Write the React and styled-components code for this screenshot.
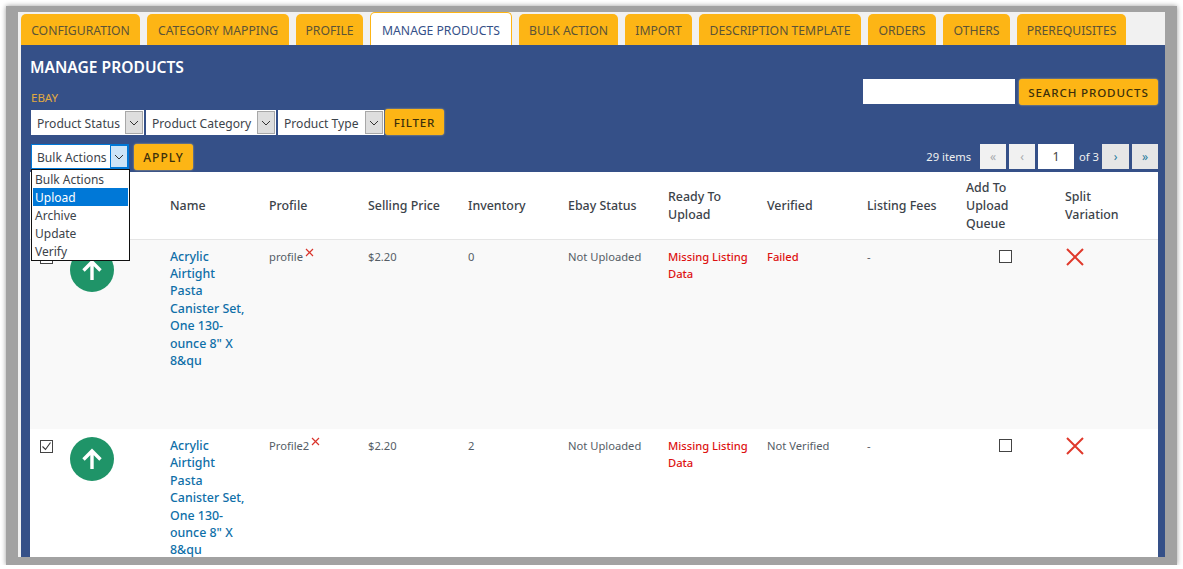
import React from "react";
import styled, { createGlobalStyle } from "styled-components";

const Global = createGlobalStyle`
  html, body { margin: 0; padding: 0; background: #fff; overflow: hidden; }
  body { font-family: "Noto Sans", "Open Sans", sans-serif; }
`;

const Frame = styled.div`
  box-sizing: border-box;
  width: 1171px;
  height: 559px;
  margin: 6px 0 0 6px;
  border-style: solid;
  border-color: #a2a2a2;
  border-width: 6px 12px 8px 12px;
  box-shadow: 0 0 5px rgba(0, 0, 0, 0.4);
  background: #f1f1f1;
  overflow: hidden;
  padding: 2px 0 0 3px;
  display: flex;
  flex-direction: column;
`;

const TabBar = styled.div`
  display: flex;
  gap: 7px;
  height: 31px;
  flex: none;
  align-items: flex-end;
`;

const Tab = styled.div`
  box-sizing: border-box;
  width: ${(p) => p.$w}px;
  height: ${(p) => (p.$active ? 33 : 31)}px;
  padding-top: 2px;
  display: flex;
  align-items: center;
  justify-content: center;
  border-radius: 5px 5px 0 0;
  background: ${(p) => (p.$active ? "#ffffff" : "#fdb515")};
  color: ${(p) => (p.$active ? "#355088" : "#5b5337")};
  border: ${(p) => (p.$active ? "1px solid #fdb515" : "none")};
  border-bottom: none;
  font-size: 12.2px;
  white-space: nowrap;
`;

const Panel = styled.div`
  flex: 1;
  min-height: 0;
  background: #355088;
  padding: 0 7px 0 9px;
  display: flex;
  flex-direction: column;
`;

const Top = styled.div`
  display: flex;
  justify-content: space-between;
  height: 99px;
  flex: none;
`;

const TopLeft = styled.div`
  display: flex;
  flex-direction: column;
  padding-left: 1px;
`;

const Title = styled.h2`
  margin: 12px 0 0 -1px;
  font-size: 15.6px;
  line-height: 20px;
  font-weight: 600;
  color: #fff;
`;

const Market = styled.div`
  margin-top: 13px;
  font-size: 11.5px;
  line-height: 16px;
  color: #e0a93f;
`;

const FilterRow = styled.div`
  display: flex;
  align-items: flex-end;
  gap: 2px;
  margin-top: 3px;
`;

const Select = styled.div`
  box-sizing: border-box;
  width: ${(p) => p.$w}px;
  height: 25px;
  background: #fff;
  display: flex;
  align-items: center;
  justify-content: space-between;
  padding: 0 1px 0 6px;
  font-size: 12.1px;
  color: #3c434a;
  white-space: nowrap;
  ${(p) => p.$focus && "outline: 1px solid #0078d7; outline-offset: -1px;"}
`;

const SelectText = styled.span`
  padding-top: 2px;
`;

const Arrow = styled.span`
  box-sizing: border-box;
  width: 18px;
  height: 23px;
  flex: none;
  display: flex;
  align-items: center;
  justify-content: center;
  background: ${(p) => (p.$focus ? "#cce4f7" : "#dedede")};
  border: 1px solid ${(p) => (p.$focus ? "#0078d7" : "#a8a8a8")};
  color: #333;
`;

const Button = styled.div`
  box-sizing: border-box;
  width: ${(p) => p.$w}px;
  height: 26px;
  flex: none;
  display: flex;
  align-items: center;
  justify-content: center;
  background: #fdb515;
  border-radius: 3px;
  box-shadow: 0 0 2px rgba(255, 215, 120, 0.8);
  color: #3b2f0b;
  font-size: ${(p) => p.$fs || 11.6}px;
  font-weight: 500;
  letter-spacing: ${(p) => p.$ls || 0.85}px;
  white-space: nowrap;
`;

const FilterButton = styled(Button)`
  margin-left: -1px;
`;

const SearchRow = styled.div`
  display: flex;
  gap: 4px;
  margin-top: 34px;
`;

const SearchInput = styled.div`
  width: 152px;
  height: 25px;
  background: #fff;
`;

const BulkRow = styled.div`
  position: relative;
  flex: none;
  height: 28px;
  display: flex;
  justify-content: space-between;
  align-items: flex-start;
  padding-left: 1px;
`;

const BulkLeft = styled.div`
  display: flex;
  gap: 5px;
`;

const Menu = styled.ul`
  position: absolute;
  left: 1px;
  top: 25px;
  z-index: 5;
  box-sizing: border-box;
  width: 99px;
  margin: 0;
  padding: 0 1px;
  list-style: none;
  background: #fff;
  border: 1px solid #111;
`;

const MenuItem = styled.li`
  height: 18px;
  line-height: 19px;
  padding-left: 2px;
  font-size: 12px;
  background: ${(p) => (p.$on ? "#0078d7" : "#fff")};
  color: ${(p) => (p.$on ? "#fff" : "#3c434a")};
`;

const Pager = styled.div`
  display: flex;
  align-items: center;
  height: 25px;
  font-size: 11.2px;
  color: #f0f0f0;
`;

const PageBtn = styled.div`
  box-sizing: border-box;
  width: ${(p) => p.$w || 26}px;
  height: 25px;
  margin-left: ${(p) => p.$ml}px;
  display: flex;
  align-items: center;
  justify-content: center;
  background: ${(p) => (p.$off ? "#f1f1f1" : "#e6e6e6")};
  color: ${(p) => (p.$off ? "#a7aaad" : "#1f7a9c")};
  font-size: 12px;
`;

const PageInput = styled.div`
  box-sizing: border-box;
  width: 36px;
  height: 25px;
  margin: 0 5px 0 3px;
  display: flex;
  align-items: center;
  justify-content: center;
  background: #fff;
  color: #444;
  font-size: 12.4px;
`;

const Table = styled.table`
  table-layout: fixed;
  border-collapse: collapse;
  width: 1128px;
  background: #fff;
  flex: none;
`;

const Th = styled.th`
  box-sizing: border-box;
  width: ${(p) => p.$w}px;
  height: 67px;
  padding: 2px 10px 0;
  text-align: left;
  font-size: 12.4px;
  line-height: 18px;
  font-weight: 500;
  color: #3c434a;
  border-bottom: 1px solid #e5e5e5;
`;

const Row = styled.tr`
  height: ${(p) => p.$h}px;
  background: ${(p) => (p.$alt ? "#f9f9f9" : "#fff")};
`;

const Td = styled.td`
  padding: 8px 10px;
  vertical-align: top;
  font-size: 11.2px;
  line-height: 17.4px;
  color: ${(p) => (p.$red ? "#dd1111" : "#555d66")};
  font-weight: ${(p) => (p.$red ? 500 : 400)};
  white-space: ${(p) => (p.$red ? "nowrap" : "normal")};
  text-align: ${(p) => (p.$center ? "center" : "left")};
`;

const CheckCell = styled.td`
  padding: 11px 0 0 10px;
  vertical-align: top;
`;

const Box = styled.span`
  box-sizing: border-box;
  display: flex;
  align-items: center;
  justify-content: center;
  width: 13px;
  height: 13px;
  border: 1px solid #444;
  background: #fff;
  ${(p) => p.$center && "margin: 2px auto 0;"}
`;

const Circle = styled.div`
  width: 44px;
  height: 44px;
  border-radius: 50%;
  background: #1f9468;
  display: flex;
  align-items: center;
  justify-content: center;
`;

const ProductLink = styled.a`
  display: block;
  color: #0f6fa8;
  font-size: 12.4px;
  font-weight: 500;
  line-height: 17.4px;
`;

const Sup = styled.svg`
  vertical-align: 4px;
  margin-left: 2px;
`;

const BigXIcon = styled.svg`
  display: block;
  margin-left: 1px;
`;

const Chevron = () => (
  <svg width="10" height="6" viewBox="0 0 10 6" fill="none" stroke="#333" strokeWidth="1">
    <path d="M1 1l4 4 4-4" />
  </svg>
);

const Up = () => (
  <svg width="24" height="24" viewBox="0 0 24 24" fill="none" stroke="#fff" strokeWidth="3.4">
    <path d="M12 22V4M3.500 12.500L12 4l8.500 8.500" />
  </svg>
);

const Tick = () => (
  <svg width="11" height="11" viewBox="0 0 11 11" fill="none" stroke="#333" strokeWidth="1.1">
    <path d="M1.500 5.500l3 3 5-7" />
  </svg>
);

const SmallX = () => (
  <Sup width="9" height="9" viewBox="0 0 9 9" fill="none" stroke="#d9342b" strokeWidth="1.2">
    <path d="M1 1l7 7M8 1l-7 7" />
  </Sup>
);

const BigX = () => (
  <BigXIcon width="18" height="18" viewBox="0 0 18 18" fill="none" stroke="#e0392b" strokeWidth="2">
    <path d="M1 1l16 16M17 1L1 17" />
  </BigXIcon>
);

const tabs = [
  ["CONFIGURATION", 119], ["CATEGORY MAPPING", 142], ["PROFILE", 67], ["MANAGE PRODUCTS", 142],
  ["BULK ACTION", 99], ["IMPORT", 67], ["DESCRIPTION TEMPLATE", 162], ["ORDERS", 68],
  ["OTHERS", 67], ["PREREQUISITES", 109],
];

const cols = [
  ["", 30], ["", 100], ["Name", 99], ["Profile", 99], ["Selling Price", 100], ["Inventory", 100],
  ["Ebay Status", 100], ["Ready To Upload", 99], ["Verified", 100], ["Listing Fees", 99],
  ["Add To Upload Queue", 99], [<>Split<br />Variation</>, 103],
];

const ProductRow = ({ alt, h, checked, profile, inventory, verified, failed }) => (
  <Row $alt={alt} $h={h}>
    <CheckCell><Box>{checked && <Tick />}</Box></CheckCell>
    <Td><Circle><Up /></Circle></Td>
    <Td><ProductLink>Acrylic Airtight Pasta Canister Set, One 130-ounce 8" X 8&amp;qu</ProductLink></Td>
    <Td>{profile}<SmallX /></Td>
    <Td>$2.20</Td>
    <Td>{inventory}</Td>
    <Td>Not Uploaded</Td>
    <Td $red>Missing Listing<br />Data</Td>
    <Td $red={failed}>{verified}</Td>
    <Td>-</Td>
    <Td $center><Box $center /></Td>
    <Td><BigX /></Td>
  </Row>
);

export default function App() {
  return (
    <>
      <Global />
      <Frame>
        <TabBar>
          {tabs.map(([t, w]) => (
            <Tab key={t} $w={w} $active={t === "MANAGE PRODUCTS"}>{t}</Tab>
          ))}
        </TabBar>
        <Panel>
          <Top>
            <TopLeft>
              <Title>MANAGE PRODUCTS</Title>
              <Market>EBAY</Market>
              <FilterRow>
                <Select $w={113}><SelectText>Product Status</SelectText><Arrow><Chevron /></Arrow></Select>
                <Select $w={130}><SelectText>Product Category</SelectText><Arrow><Chevron /></Arrow></Select>
                <Select $w={106}><SelectText>Product Type</SelectText><Arrow><Chevron /></Arrow></Select>
                <FilterButton $w={59}>FILTER</FilterButton>
              </FilterRow>
            </TopLeft>
            <SearchRow>
              <SearchInput />
              <Button $w={139}>SEARCH PRODUCTS</Button>
            </SearchRow>
          </Top>
          <BulkRow>
            <BulkLeft>
              <Select $w={98} $focus><SelectText>Bulk Actions</SelectText><Arrow $focus><Chevron /></Arrow></Select>
              <Button $w={59} $fs={12} $ls={1}>APPLY</Button>
            </BulkLeft>
            <Menu>
              <MenuItem>Bulk Actions</MenuItem>
              <MenuItem $on>Upload</MenuItem>
              <MenuItem>Archive</MenuItem>
              <MenuItem>Update</MenuItem>
              <MenuItem>Verify</MenuItem>
            </Menu>
            <Pager>
              29 items
              <PageBtn $off $ml={9}>«</PageBtn>
              <PageBtn $off $ml={3}>‹</PageBtn>
              <PageInput>1</PageInput>
              of 3
              <PageBtn $ml={3} $w={27}>›</PageBtn>
              <PageBtn $ml={3}>»</PageBtn>
            </Pager>
          </BulkRow>
          <Table>
            <thead>
              <tr>
                {cols.map(([t, w], i) => <Th key={i} $w={w}>{t}</Th>)}
              </tr>
            </thead>
            <tbody>
              <ProductRow alt h={190} profile="profile" inventory="0" verified="Failed" failed />
              <ProductRow checked h={190} profile="Profile2" inventory="2" verified="Not Verified" />
            </tbody>
          </Table>
        </Panel>
      </Frame>
    </>
  );
}
